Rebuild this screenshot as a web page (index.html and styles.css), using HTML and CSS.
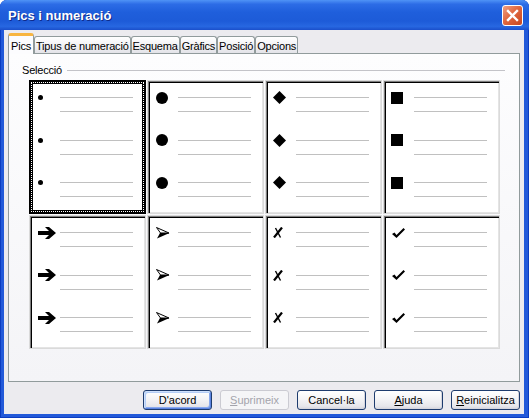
FILE: index.html
```html
<!DOCTYPE html>
<html lang="ca">
<head>
    <meta charset="UTF-8">
    <title>Pics i numeració</title>
    <link rel="stylesheet" href="styles.css">
</head>
<body>
<div class="window">
    <div class="titlebar">
        <span class="title">Pics i numeració</span>
        <span class="close">
            <svg width="19" height="19" viewBox="0 0 19 19"><path d="M5 5 L14 14 M14 5 L5 14" stroke="#fff" stroke-width="2.4" stroke-linecap="square"/></svg>
        </span>
    </div>
    <div class="client">
        <div class="tabs">
            <div class="tab active">Pics</div>
            <div class="tab">Tipus de numeració</div>
            <div class="tab">Esquema</div>
            <div class="tab">Gràfics</div>
            <div class="tab">Posició</div>
            <div class="tab">Opcions</div>
        </div>
        <div class="panel">
            <div class="group-title">Selecció</div>
            <div class="tiles">
                <!-- row 1 -->
                <div class="tile selected">
                    <div class="item"><span class="mark"><svg width="5" height="5" viewBox="0 0 5 5"><circle cx="2.5" cy="2.5" r="2.5"/></svg></span><span class="lines"></span></div>
                    <div class="item"><span class="mark"><svg width="5" height="5" viewBox="0 0 5 5"><circle cx="2.5" cy="2.5" r="2.5"/></svg></span><span class="lines"></span></div>
                    <div class="item"><span class="mark"><svg width="5" height="5" viewBox="0 0 5 5"><circle cx="2.5" cy="2.5" r="2.5"/></svg></span><span class="lines"></span></div>
                </div>
                <div class="tile">
                    <div class="item"><span class="mark"><svg width="12" height="12" viewBox="0 0 12 12"><circle cx="6" cy="6" r="6"/></svg></span><span class="lines"></span></div>
                    <div class="item"><span class="mark"><svg width="12" height="12" viewBox="0 0 12 12"><circle cx="6" cy="6" r="6"/></svg></span><span class="lines"></span></div>
                    <div class="item"><span class="mark"><svg width="12" height="12" viewBox="0 0 12 12"><circle cx="6" cy="6" r="6"/></svg></span><span class="lines"></span></div>
                </div>
                <div class="tile">
                    <div class="item"><span class="mark shift"><svg width="13" height="13" viewBox="0 0 13 13"><polygon points="6.5,0 13,6.5 6.5,13 0,6.5"/></svg></span><span class="lines"></span></div>
                    <div class="item"><span class="mark shift"><svg width="13" height="13" viewBox="0 0 13 13"><polygon points="6.5,0 13,6.5 6.5,13 0,6.5"/></svg></span><span class="lines"></span></div>
                    <div class="item"><span class="mark shift"><svg width="13" height="13" viewBox="0 0 13 13"><polygon points="6.5,0 13,6.5 6.5,13 0,6.5"/></svg></span><span class="lines"></span></div>
                </div>
                <div class="tile">
                    <div class="item"><span class="mark shift"><svg width="12" height="12" viewBox="0 0 12 12"><rect width="12" height="12"/></svg></span><span class="lines"></span></div>
                    <div class="item"><span class="mark shift"><svg width="12" height="12" viewBox="0 0 12 12"><rect width="12" height="12"/></svg></span><span class="lines"></span></div>
                    <div class="item"><span class="mark shift"><svg width="12" height="12" viewBox="0 0 12 12"><rect width="12" height="12"/></svg></span><span class="lines"></span></div>
                </div>
                <!-- row 2 -->
                <div class="tile">
                    <div class="item"><span class="mark"><svg width="19" height="12" viewBox="0 0 19 12"><polygon points="0,4 11,4 7,0 11,0 18,6 11,12 7,12 11,8 0,8"/></svg></span><span class="lines"></span></div>
                    <div class="item"><span class="mark"><svg width="19" height="12" viewBox="0 0 19 12"><polygon points="0,4 11,4 7,0 11,0 18,6 11,12 7,12 11,8 0,8"/></svg></span><span class="lines"></span></div>
                    <div class="item"><span class="mark"><svg width="19" height="12" viewBox="0 0 19 12"><polygon points="0,4 11,4 7,0 11,0 18,6 11,12 7,12 11,8 0,8"/></svg></span><span class="lines"></span></div>
                </div>
                <div class="tile">
                    <div class="item"><span class="mark"><svg width="14" height="12" viewBox="0 0 14 12"><path d="M0.5 0.5 L13 6 L4.5 6 Z" fill="#fff" stroke="#000" stroke-width="1"/><path d="M4 6 L13.5 6 L1 11.5 Z"/></svg></span><span class="lines"></span></div>
                    <div class="item"><span class="mark"><svg width="14" height="12" viewBox="0 0 14 12"><path d="M0.5 0.5 L13 6 L4.5 6 Z" fill="#fff" stroke="#000" stroke-width="1"/><path d="M4 6 L13.5 6 L1 11.5 Z"/></svg></span><span class="lines"></span></div>
                    <div class="item"><span class="mark"><svg width="14" height="12" viewBox="0 0 14 12"><path d="M0.5 0.5 L13 6 L4.5 6 Z" fill="#fff" stroke="#000" stroke-width="1"/><path d="M4 6 L13.5 6 L1 11.5 Z"/></svg></span><span class="lines"></span></div>
                </div>
                <div class="tile">
                    <div class="item"><span class="mark shift"><svg width="10" height="11" viewBox="0 0 10 11"><path d="M2.5 1 L7.5 10.5" stroke="#000" stroke-width="1.4"/><path d="M1 10.5 L9 0.5" stroke="#000" stroke-width="2.2"/></svg></span><span class="lines"></span></div>
                    <div class="item"><span class="mark shift"><svg width="10" height="11" viewBox="0 0 10 11"><path d="M2.5 1 L7.5 10.5" stroke="#000" stroke-width="1.4"/><path d="M1 10.5 L9 0.5" stroke="#000" stroke-width="2.2"/></svg></span><span class="lines"></span></div>
                    <div class="item"><span class="mark shift"><svg width="10" height="11" viewBox="0 0 10 11"><path d="M2.5 1 L7.5 10.5" stroke="#000" stroke-width="1.4"/><path d="M1 10.5 L9 0.5" stroke="#000" stroke-width="2.2"/></svg></span><span class="lines"></span></div>
                </div>
                <div class="tile">
                    <div class="item"><span class="mark"><svg width="13" height="10" viewBox="0 0 13 10"><polygon points="0,6 2.5,4.5 4.5,7 11.5,0 13,1.5 4.5,10"/></svg></span><span class="lines"></span></div>
                    <div class="item"><span class="mark"><svg width="13" height="10" viewBox="0 0 13 10"><polygon points="0,6 2.5,4.5 4.5,7 11.5,0 13,1.5 4.5,10"/></svg></span><span class="lines"></span></div>
                    <div class="item"><span class="mark"><svg width="13" height="10" viewBox="0 0 13 10"><polygon points="0,6 2.5,4.5 4.5,7 11.5,0 13,1.5 4.5,10"/></svg></span><span class="lines"></span></div>
                </div>
            </div>
        </div>
        <div class="buttons">
            <button class="btn default">D'acord</button>
            <button class="btn" disabled><u>S</u>uprimeix</button>
            <button class="btn">Cancel·la</button>
            <button class="btn"><u>A</u>juda</button>
            <button class="btn"><u>R</u>einicialitza</button>
        </div>
    </div>
</div>
</body>
</html>
```

FILE: styles.css
```css
body {
    margin: 0;
    background: #ffffff;
    font-family: "Liberation Sans", Arial, sans-serif;
    font-size: 11px;
    color: #000;
}

.window {
    width: 529px;
    height: 418px;
    display: flex;
    flex-direction: column;
    background: #2259d9;
    border-radius: 7px 7px 0 0;
    overflow: hidden;
    box-shadow: inset 1px 0 0 #0b3cc1, inset -1px 0 0 #0b3cc1, inset 0 -1px 0 #0b3cc1;
}

/* title bar */
.titlebar {
    height: 30px;
    flex: none;
    display: flex;
    align-items: center;
    justify-content: space-between;
    padding: 0 6px 0 8px;
    background: linear-gradient(#4f93f6 0%, #2c6ce6 14%, #1f5fdc 40%, #1d5bd8 70%, #2767e1 88%, #1a4fcb 100%);
}

.title {
    color: #fff;
    font-size: 13px;
    font-weight: bold;
    text-shadow: 1px 1px 0 #0f2a8a;
    margin-top: 1px;
}

.close {
    width: 19px;
    height: 19px;
    border: 1px solid #fff;
    border-radius: 3px;
    background: linear-gradient(135deg, #f0a083 0%, #e06840 45%, #c8461e 100%);
    display: flex;
    margin-top: 1px;
}

/* client area */
.client {
    flex: 1;
    display: flex;
    flex-direction: column;
    margin: 0 5px 4px 4px;
    padding: 3px 4px 0 4px;
    background: #ecebef;
}

.tabs {
    display: flex;
    align-items: flex-start;
    height: 21px;
    margin-bottom: -1px;
    position: relative;
    z-index: 1;
}

.tab {
    box-sizing: border-box;
    height: 17px;
    margin-top: 3px;
    padding: 3px 1px 0;
    line-height: 13px;
    letter-spacing: -0.2px;
    border: 1px solid #919b9c;
    border-bottom: none;
    border-radius: 3px 3px 0 0;
    background: linear-gradient(#ffffff, #f0f0f3 60%, #e3e3e8);
    white-space: nowrap;
}

.tab.active {
    height: 21px;
    margin-top: 0;
    padding: 4px 2px 0;
    border-top: 3px solid #f8b540;
    background: #fcfcfe;
}

.panel {
    height: 329px;
    box-sizing: border-box;
    flex: none;
    padding: 9px 14px 0 13px;
    border: 1px solid #919b9c;
    background: linear-gradient(#fdfdfe, #f4f4f7);
}

.group-title {
    display: flex;
    align-items: center;
    gap: 5px;
    height: 14px;
    letter-spacing: -0.2px;
}

.group-title::after {
    content: "";
    flex: 1;
    height: 1px;
    background: #c3c3c8;
}

.tiles {
    display: grid;
    grid-template-columns: repeat(4, 117px);
    grid-template-rows: repeat(2, 134px);
    gap: 1px;
    margin: 3px 0 0 7px;
}

.tile {
    box-sizing: border-box;
    display: flex;
    flex-direction: column;
    gap: 27.5px;
    padding-top: 16px;
    background: #fff;
    border: 1px solid #dadada;
    box-shadow: inset 1px 1px 0 #7d7d7d, inset 2px 2px 0 #000, inset -1px -1px 0 #e4e4e4;
}

.tile.selected {
    padding-top: 13px;
    border: 4px solid #000;
    box-shadow: none;
    outline: 1px dotted #fff;
    outline-offset: -3px;
}

.item {
    display: flex;
    height: 15px;
}

.tile.selected .item {
    margin-left: -3px;
}

.mark {
    box-sizing: border-box;
    width: 30px;
    height: 1px;
    padding-left: 8px;
    display: flex;
    align-items: center;
}

.mark.shift {
    padding-left: 7px;
}

.mark svg {
    flex: none;
    fill: #000;
}

.lines {
    width: 73px;
    height: 13px;
    border-top: 1px solid #c0c0c0;
    border-bottom: 1px solid #c0c0c0;
}

/* buttons */
.buttons {
    display: flex;
    justify-content: flex-end;
    gap: 8px;
    margin-top: 8px;
}

.btn {
    width: 69px;
    height: 20px;
    padding: 0;
    font-family: inherit;
    font-size: 11px;
    color: #000;
    border: 1px solid #1e3c6e;
    border-radius: 3px;
    background: linear-gradient(#ffffff, #f4f4f6 45%, #e6e6eb 85%, #d5d5dc);
    box-shadow: inset -1px -1px 0 #d6d6de;
}

.btn.default {
    box-shadow: inset 1px 1px 0 #cee0fc, inset -1px -1px 0 #5b83e0, inset 2px 2px 0 #b4cdf6, inset -2px -2px 0 #88a9ee;
}

.btn:disabled {
    color: #a4a4ac;
    border-color: #cbcbd2;
    background: #f5f5f7;
    box-shadow: none;
}
```
